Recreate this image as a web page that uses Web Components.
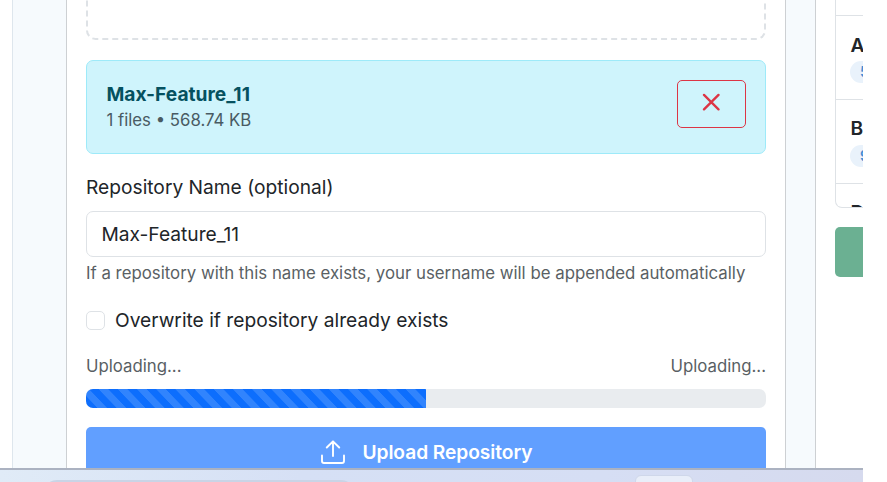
<!DOCTYPE html>
<html lang="en">
<head>
<meta charset="utf-8">
<title>Upload Repository</title>
<style>
html,body{margin:0;background:#fff}
body{width:887px;height:482px;overflow:hidden;font-family:Inter,"Liberation Sans",sans-serif;font-size:19.2px;color:#212529}
</style>
</head>
<body>
<app-screen>
  <upload-panel slot="main">
    <drop-zone></drop-zone>
    <file-card name="Max-Feature_11">1 files • 568.74 KB</file-card>
    <text-field label="Repository Name (optional)" value="Max-Feature_11">If a repository with this name exists, your username will be appended automatically</text-field>
    <check-option>Overwrite if repository already exists</check-option>
    <upload-progress style="--value:50%"><span>Uploading...</span><span slot="status">Uploading...</span></upload-progress>
    <upload-button>Upload Repository</upload-button>
  </upload-panel>
  <repo-list slot="side">
    <repo-row></repo-row>
    <repo-row name="A" count="5"></repo-row>
    <repo-row name="B" count="9"></repo-row>
    <repo-row name="D"></repo-row>
  </repo-list>
  <task-bar slot="bar"></task-bar>
</app-screen>
<script>
const define = (tag, html, init) => customElements.define(tag, class extends HTMLElement {
  constructor() {
    super();
    const t = document.createElement('template');
    t.innerHTML = '<style>*{box-sizing:border-box}</style>' + html;
    this.attachShadow({mode: 'open'}).append(t.content.cloneNode(true));
  }
  connectedCallback() { if (init) init(this, this.shadowRoot); }
});

define('app-screen', `<style>
:host{display:grid;grid-template:468px 14px / 863px;width:863px;height:482px;overflow:hidden}
.page{display:grid;grid-template-columns:12px 54px 720px 29px 48px;overflow:hidden}
.g1{background:#f6fafd;border-left:1px solid #dee6ed}
.g2{background:#f6fafd}
.main{border:solid #cdd0d3;border-width:0 1px;padding:0 19px;overflow:hidden;height:468px}
.side{border-left:1px solid #cdd0d3;padding-left:19px;overflow:hidden;height:468px}
</style><div class="page"><div></div><div class="g1"></div><div class="main"><slot name="main"></slot></div><div class="g2"></div><div class="side"><slot name="side"></slot></div></div><slot name="bar"></slot>`);

define('upload-panel', `<style>:host{display:flex;flex-direction:column;width:680px}</style><slot></slot>`);

define('drop-zone', `<style>:host{display:block;height:40px;overflow:hidden}
div{height:240px;margin-top:-200px;border:2px dashed #dee2e6;border-radius:9.6px}</style><div></div>`);

define('file-card', `<style>
:host{display:flex;box-sizing:border-box;justify-content:space-between;margin-top:20px;height:94px;padding:19px;border:1px solid #9eeaf9;border-radius:7px;background:#cff4fc}
.t{padding:0 0 0 .4px}
b{display:block;font-weight:700;line-height:28px;color:#055160}
small{display:block;font-size:16.8px;line-height:25px;color:#495b63}
button{width:69px;height:48px;padding:0 1px 4px 0;border:1px solid #dc3545;border-radius:5px;background:none;display:grid;place-items:center}
svg{display:block}
</style><div class="t"><b></b><small><slot></slot></small></div><button aria-label="Remove"><svg width="18" height="18" viewBox="-.5 -.4 18 18" fill="none" stroke="#dc3545" stroke-width="2.3" stroke-linecap="round"><path d="M1.5 1.5 16 16M16 1.500 1.500 16"/></svg></button>`,
(el, r) => r.querySelector('b').textContent = el.getAttribute('name'));

define('text-field', `<style>
:host{display:block;margin-top:19px}
label{display:block;line-height:29px;height:38px}
div{height:46px;border:1px solid #dee2e6;border-radius:7px;padding:0 14.400px;line-height:45px}
small{display:block;font-size:16.81px;line-height:25px;margin-top:4px;color:#595f64;white-space:nowrap}
</style><label></label><div></div><small><slot></slot></small>`, (el, r) => {
  r.querySelector('label').textContent = el.getAttribute('label');
  r.querySelector('div').textContent = el.getAttribute('value');
});

define('check-option', `<style>
:host{display:flex;align-items:center;gap:10px;height:29px;margin-top:20px}
i{width:19px;height:19px;border:1px solid #dee2e6;border-radius:5px;background:#fff}
span{padding-bottom:2px}
</style><i></i><span><slot></slot></span>`);

define('upload-progress', `<style>
:host{display:block;margin-top:18px;font-size:16.8px;color:#595f64}
.l{display:flex;justify-content:space-between;line-height:27px;height:36px}
.b{height:19px;border-radius:7px;overflow:hidden;background:#e9ecef}
.v{width:var(--value);height:100%;background:linear-gradient(45deg,rgba(255,255,255,.15) 25%,transparent 25%,transparent 50%,rgba(255,255,255,.15) 50%,rgba(255,255,255,.15) 75%,transparent 75%,transparent) 12px 0/19.2px 19.2px #0d6efd}
</style><div class="l"><slot></slot><slot name="status"></slot></div><div class="b"><div class="v"></div></div>`);

define('upload-button', `<style>
:host{display:flex;align-items:center;justify-content:center;gap:17px;height:50px;margin-top:19px;padding-left:2px;border-radius:5px;background:#619fff;color:#fff;font-weight:600}
svg{display:block}
span{letter-spacing:-.06px}
</style><svg width="24" height="24" viewBox="0 0 24 24" fill="none" stroke="#fff" stroke-width="1.9" stroke-linecap="round" stroke-linejoin="round"><path d="M1 15.500v5.500a2 2 0 0 0 2 2h18a2 2 0 0 0 2-2v-5.500M12 16V1.500M5.800 7.500 12 1.300l6.200 6.200"/></svg><span><slot></slot></span>`);

define('repo-list', `<style>
:host{display:block;width:200px}
.box{height:208px;overflow:hidden;border:1px solid #dee2e6;border-top:0;border-radius:0 0 7px 7px}
.go{height:50px;margin-top:19px;border-radius:5px;background:#6bb092}
</style><div class="box"><slot></slot></div><div class="go"></div>`);

define('repo-row', `<style>
:host{display:block;box-sizing:border-box;height:84px;border-bottom:1px solid #dee2e6;padding:15px 14px}
:host(:first-child){height:16px;padding:0}
b{display:block;font-weight:600;line-height:29px;height:29px;padding-left:.6px}
:host([name="B"]) b,:host([name="D"]) b{line-height:27px}
span{display:block;width:60px;height:22px;border-radius:11px;background:#e9f2fb;color:#428bd3;font-size:14.400px;font-weight:600;line-height:22px;padding-left:10px;margin-top:1px}
:host(:not([count])) span,:host(:first-child) b{display:none}
</style><b></b><span></span>`, (el, r) => {
  r.querySelector('b').textContent = el.getAttribute('name') || '';
  r.querySelector('span').textContent = el.getAttribute('count') || '';
});

define('task-bar', `<style>
:host{display:block;box-sizing:border-box;position:relative;height:14px;border-top:2px solid #abb2c1;background:linear-gradient(90deg,#e0ebf7,#d6e0f5 35%,#d6def4 70%,#d6daee);overflow:hidden}
.s{position:absolute;left:43px;top:10px;width:312px;height:30px;border-radius:14px;background:#c9d4e6}
.a{position:absolute;left:635px;top:5px;width:58px;height:40px;border:1px solid #cfd7ea;border-radius:6px;background:#e9eef9}
</style><div class="s"></div><div class="a"></div>`);
</script>
</body>
</html>
